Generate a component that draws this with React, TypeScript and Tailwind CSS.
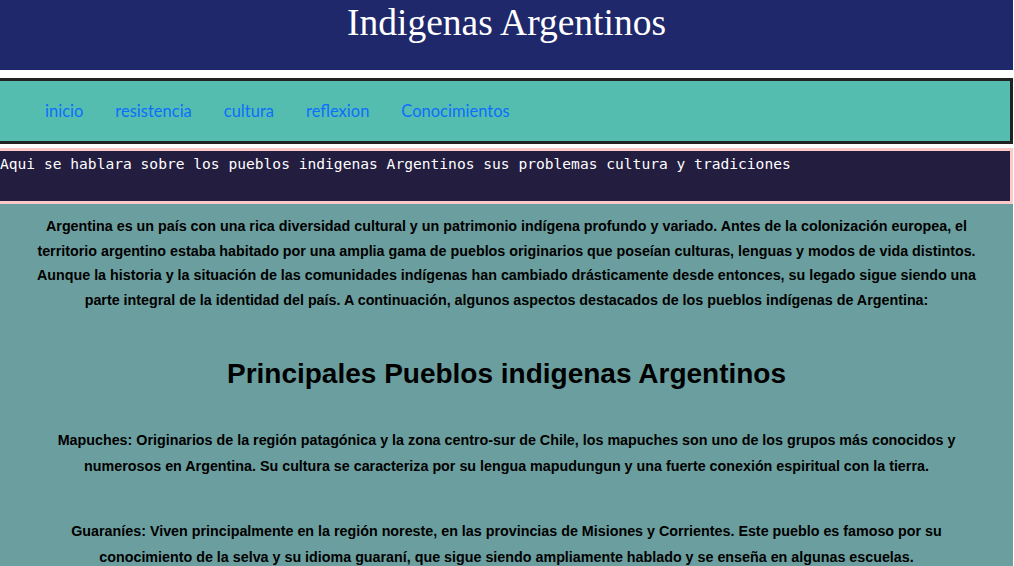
export default function App() {
  const links = ["inicio", "resistencia", "cultura", "reflexion", "Conocimientos"];

  return (
    <div className="min-h-screen w-[1013px] bg-[#6b9e9e]">
      <header className="h-[70px] bg-[#1f286b] text-center">
        <h1 className="pt-[2px] font-['Liberation_Serif',serif] text-[37.5px] leading-[42px] text-white">
          Indigenas Argentinos
        </h1>
      </header>

      <div className="bg-white pt-2">
        <nav className="h-[66px] border-y-[3px] border-r-[3px] border-[#222] bg-[#54bdb0]">
          <ul className="flex h-full items-center gap-[32px] pl-[45px] font-['Lato',sans-serif] text-[16.5px] text-[#0d6efd]">
            {links.map((l) => (
              <li key={l}>
                <a href="#">{l}</a>
              </li>
            ))}
          </ul>
        </nav>

        <div className="mt-1 h-[56px] border-y-[3px] border-r-[3px] border-[#fcc8c8] bg-[#231d3f] font-['DejaVu_Sans_Mono',monospace] text-[14.6px] leading-[20px] text-white">
          <p className="pt-[3px]">
            Aqui se hablara sobre los pueblos indigenas Argentinos sus problemas cultura y tradiciones
          </p>
        </div>
      </div>

      <main className="px-[21px] pt-[10px] text-center font-['Liberation_Sans_Narrow',sans-serif] font-bold text-black">
        <p className="text-[14.3px] leading-[24.5px]">
          Argentina es un país con una rica diversidad cultural y un patrimonio indígena profundo y variado. Antes de la colonización europea, el territorio argentino estaba habitado por una amplia gama de pueblos originarios que poseían culturas, lenguas y modos de vida distintos. Aunque la historia y la situación de las comunidades indígenas han cambiado drásticamente desde entonces, su legado sigue siendo una parte integral de la identidad del país. A continuación, algunos aspectos destacados de los pueblos indígenas de Argentina:
        </p>

        <h2 className="mt-[42px] text-[28px] leading-[40px]">Principales Pueblos indigenas Argentinos</h2>

        <p className="mt-[33px] text-[14.3px] leading-[26px]">
          Mapuches: Originarios de la región patagónica y la zona centro-sur de Chile, los mapuches son uno de los grupos más conocidos y numerosos en Argentina. Su cultura se caracteriza por su lengua mapudungun y una fuerte conexión espiritual con la tierra.
        </p>

        <p className="mt-[39px] px-[20px] text-[14.3px] leading-[26px]">
          Guaraníes: Viven principalmente en la región noreste, en las provincias de Misiones y Corrientes. Este pueblo es famoso por su conocimiento de la selva y su idioma guaraní, que sigue siendo ampliamente hablado y se enseña en algunas escuelas.
        </p>
      </main>
    </div>
  );
}
